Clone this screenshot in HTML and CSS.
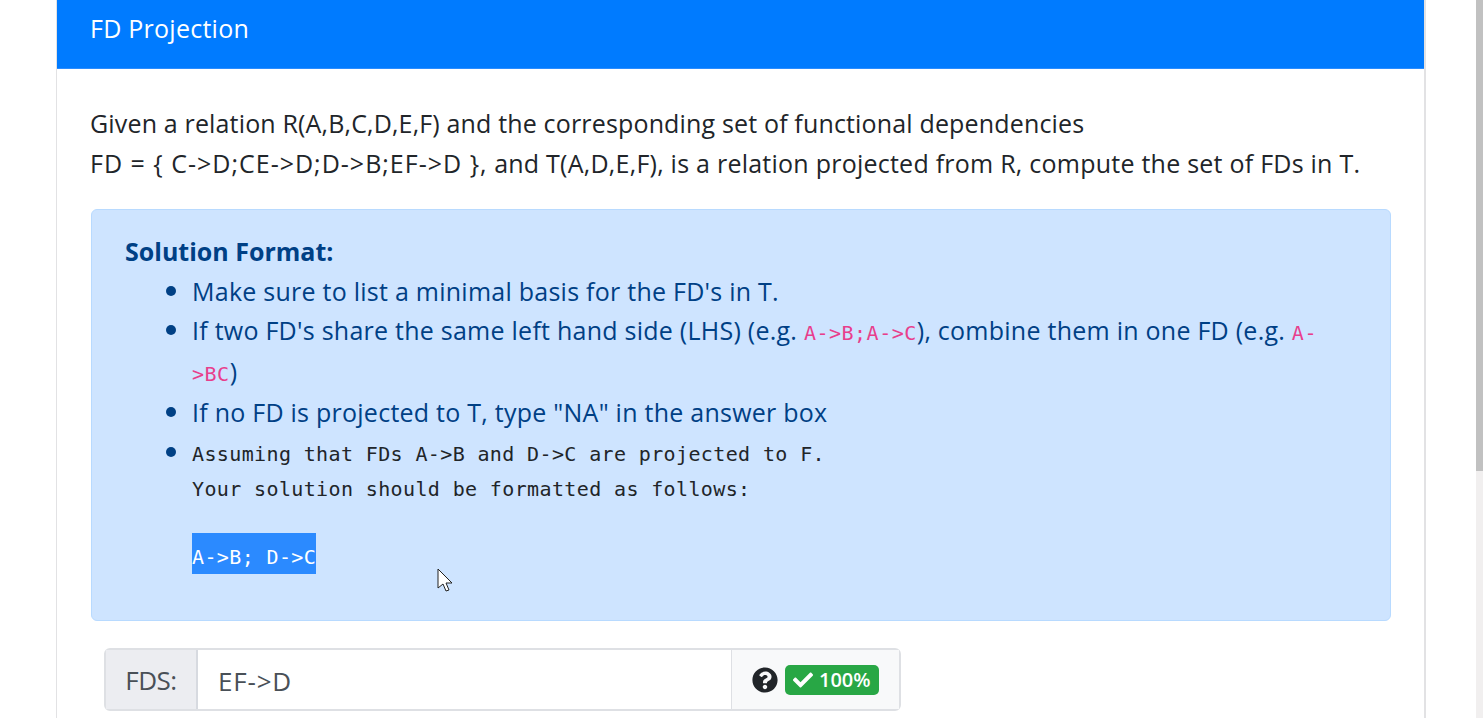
FILE: index.html
```html
<!DOCTYPE html>
<html lang="en">
<head>
    <meta charset="UTF-8">
    <meta name="viewport" content="width=device-width, initial-scale=1.0">
    <title>FD Projection</title>
    <link rel="stylesheet" href="styles.css">
</head>
<body>
    <div class="card">
        <div class="card-header">FD Projection</div>
        <div class="card-body">
            <p class="question">Given a relation R(A,B,C,D,E,F) and the corresponding set of functional dependencies<br><span class="formula">FD = { C-&gt;D;CE-&gt;D;D-&gt;B;EF-&gt;D },</span> <span class="formula-rest">and T(A,D,E,F), is a relation projected from R, compute the set of FDs in T.</span></p>
            <div class="alert">
                <strong class="alert-title">Solution Format:</strong>
                <ul class="rules">
                    <li>Make sure to list a minimal basis for the FD's in T.</li>
                    <li class="wrap-item">If two FD's share the same left hand side (LHS) (e.g. <code>A-&gt;B;A-&gt;C</code>), combine them in one FD (e.g. <code>A-</code><br><code class="wrapped">&gt;BC</code>)</li>
                    <li>If no FD is projected to T, type "NA" in the answer box</li>
                    <li class="sample-item">
                        <pre class="sample">Assuming that FDs A-&gt;B and D-&gt;C are projected to F.
Your solution should be formatted as follows:</pre>
                        <span class="selected">A-&gt;B; D-&gt;C</span>
                    </li>
                </ul>
            </div>
            <div class="input-group">
                <span class="prepend">FDS:</span>
                <span class="answer">EF-&gt;D</span>
                <span class="append">
                    <svg class="help" viewBox="0 0 512 512" width="26" height="26"><path fill="#212529" d="M504 256c0 137-111 248-248 248S8 393 8 256 119 8 256 8s248 111 248 248zM263 90c-54 0-89 23-116 64-4 5-3 12 3 16l35 26c5 4 13 3 17-2 18-23 30-36 58-36 21 0 47 13 47 34 0 15-13 23-34 35-24 14-57 31-57 75v6c0 7 5 12 12 12h56c7 0 12-5 12-12v-3c0-30 89-32 89-113 0-62-64-102-122-102zm-7 258c-24 0-44 20-44 44s20 44 44 44 44-20 44-44-20-44-44-44z"/></svg>
                    <span class="badge">
                        <svg viewBox="0 0 512 512" width="20" height="20"><path fill="#fff" d="M174 439L7 273c-10-10-10-26 0-36l36-36c10-10 26-10 36 0l113 112L433 73c10-10 26-10 36 0l36 36c10 10 10 26 0 36L210 439c-10 10-26 10-36 0z"/></svg>
                        100%
                    </span>
                </span>
            </div>
        </div>
    </div>
    <div class="scrollbar"><div class="scrollbar-thumb"></div></div>
    <svg class="cursor" viewBox="0 0 17 25" width="17" height="25"><path fill="#fff" stroke="#222" d="M1 1v19l5-4 3 7 3-1-3-7h6z"/></svg>
</body>
</html>
```

FILE: styles.css
```css
html, body {
    height: 100%;
}
body {
    font-family: "Open Sans", "Noto Sans", sans-serif;
    background-color: #fff;
    color: #212529;
    margin: 0;
    overflow: hidden;
}
.card {
    margin-left: 56px;
    width: 1370px;
    box-sizing: border-box;
    border-left: 1px solid #e2e2e4;
    border-right: 2px solid #e2e2e4;
    height: 100%;
}
.card-header {
    height: 68px;
    line-height: 57px;
    padding-left: 33px;
    background-color: #007bff;
    border-bottom: 1px solid #2a8cff;
    color: #fff;
    font-size: 25px;
    letter-spacing: 0.25px;
}
.card-body {
    padding: 0 33px 0 34px;
}
.question {
    margin: 34px 0 26px -1px;
    font-size: 25px;
    line-height: 40px;
    letter-spacing: 0.16px;
}
.formula {
    letter-spacing: 1px;
}
.formula-rest {
    letter-spacing: 0.24px;
}
.alert {
    box-sizing: border-box;
    height: 412px;
    padding: 22px 33px;
    background-color: #cee4ff;
    border: 1px solid #b8daff;
    border-radius: 6px;
    color: #004085;
    font-size: 25px;
    line-height: 38px;
    letter-spacing: 0.25px;
}
.alert-title {
    display: block;
    letter-spacing: 0;
}
.rules {
    margin: 1px 0 0;
    padding-left: 67px;
    list-style: none;
}
.rules li {
    position: relative;
    line-height: 40px;
}
.rules li::before {
    content: "";
    position: absolute;
    left: -26px;
    top: 15px;
    width: 10px;
    height: 10px;
    border-radius: 50%;
    background-color: #004085;
}
.rules .wrap-item {
    margin-top: -1px;
    margin-bottom: 1px;
}
.rules .sample-item::before {
    top: 10px;
}
code {
    font-family: "DejaVu Sans Mono", monospace;
    font-size: 20px;
    line-height: 0;
    letter-spacing: 0.5px;
    color: #e83e8c;
}
.wrapped {
    display: inline-block;
    line-height: 20px;
    margin-top: 14px;
}
.sample {
    margin: 5px 0 0;
    color: #212529;
    font-family: "DejaVu Sans Mono", monospace;
    font-size: 20px;
    line-height: 35px;
    letter-spacing: 0.37px;
}
.selected {
    display: inline-block;
    margin-top: 26px;
    height: 41px;
    line-height: 49px;
    background-color: #2b8aff;
    color: #fff;
    font-family: "DejaVu Sans Mono", monospace;
    font-size: 20px;
    letter-spacing: 0.37px;
}
.input-group {
    display: flex;
    width: 797px;
    height: 63px;
    margin: 27px 0 0 13px;
    box-sizing: border-box;
    border: 2px solid #dee0e4;
    border-radius: 6px;
    font-size: 26px;
    color: #495057;
    letter-spacing: -0.5px;
}
.prepend {
    width: 92px;
    background-color: #ecedf1;
    border-right: 2px solid #d7dae0;
    line-height: 60px;
    text-align: center;
    flex: none;
    box-sizing: border-box;
}
.answer {
    width: 533px;
    flex: none;
    box-sizing: border-box;
    padding-left: 20px;
    line-height: 62px;
    letter-spacing: 0.8px;
}
.append {
    flex: 1;
    display: flex;
    align-items: center;
    gap: 7px;
    padding-left: 20px;
    background-color: #f8f9fa;
    border-left: 1px solid #dee0e4;
}
.help {
    flex: none;
}
.badge {
    display: flex;
    align-items: center;
    gap: 6px;
    height: 30px;
    padding: 0 8px;
    background-color: #28a745;
    border-radius: 5px;
    color: #fff;
    font-size: 20px;
    font-weight: 600;
    letter-spacing: 0;
}
.scrollbar {
    position: fixed;
    top: 0;
    right: 0;
    width: 7px;
    height: 100%;
    background-color: #f1efef;
}
.scrollbar-thumb {
    height: 471px;
    background-color: #c1c1c1;
}
.cursor {
    position: fixed;
    left: 437px;
    top: 568px;
}
```
